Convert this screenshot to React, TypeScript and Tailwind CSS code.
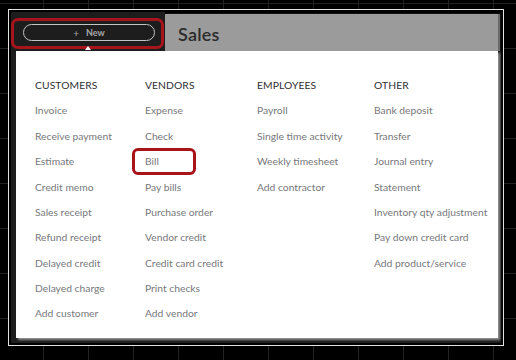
import React from 'react';

const columns: { title: string; items: string[] }[] = [
  {
    title: 'CUSTOMERS',
    items: [
      'Invoice',
      'Receive payment',
      'Estimate',
      'Credit memo',
      'Sales receipt',
      'Refund receipt',
      'Delayed credit',
      'Delayed charge',
      'Add customer',
    ],
  },
  {
    title: 'VENDORS',
    items: [
      'Expense',
      'Check',
      'Bill',
      'Pay bills',
      'Purchase order',
      'Vendor credit',
      'Credit card credit',
      'Print checks',
      'Add vendor',
    ],
  },
  {
    title: 'EMPLOYEES',
    items: ['Payroll', 'Single time activity', 'Weekly timesheet', 'Add contractor'],
  },
  {
    title: 'OTHER',
    items: [
      'Bank deposit',
      'Transfer',
      'Journal entry',
      'Statement',
      'Inventory qty adjustment',
      'Pay down credit card',
      'Add product/service',
    ],
  },
];

const App: React.FC = () => {
  return (
    <div
      className="w-[516px] h-[360px] bg-black pl-[8px] pt-[9px] bg-[linear-gradient(to_right,#222_1px,transparent_1px),linear-gradient(to_bottom,#222_1px,transparent_1px)] bg-[size:45px_45px] bg-[position:43px_3px]"
      style={{ fontFamily: 'Lato, "Open Sans", sans-serif' }}
    >
      <div className="w-[496px] h-[337px] border border-[#e2e2e2] bg-black p-[2px]">
        <div className="relative flex flex-col h-full">
          {/* top bar */}
          <div className="flex h-[39px]">
            <div className="w-[154px] bg-[#1d1d1d] pt-[6px]">
              <div className="h-[31px] w-[153px] border-[3px] border-[#a8141b] rounded-[7px] pl-[9px] pt-[3px]">
                <button className="flex items-center justify-center gap-[7px] w-[132px] h-[17px] rounded-full border-[1.5px] border-[#c4c4c4] text-[9px] font-bold text-[#a9a9a9] leading-none">
                  <span className="text-[10px] font-normal">+</span>
                  <span>New</span>
                </button>
              </div>
            </div>
            <div className="flex-1 mt-[2px] mr-[3px] bg-[#9b9b9b] flex items-center pl-[13px] pt-[4px] shadow-[2px_0_1px_#6a6a6a]">
              <h1 className="text-[18px] font-semibold text-[#2b2b2b] tracking-[0.2px]">Sales</h1>
            </div>
          </div>

          {/* caret under New */}
          <div className="absolute left-[74px] top-[34px] w-0 h-0 border-l-[3px] border-r-[3px] border-b-[4px] border-l-transparent border-r-transparent border-b-white" />

          {/* dropdown panel */}
          <div className="flex flex-1 bg-[#1d1d1d] pb-[5px]">
            <div className="ml-[5px] mr-[3px] flex-1 bg-white shadow-[2px_2px_2px_rgba(160,160,160,0.9)] pl-[19px] pt-[22px]">
              <div className="grid grid-cols-[110px_112px_117px_1fr]">
                {columns.map((col) => (
                  <div key={col.title} className="flex flex-col">
                    <div className="h-[25.4px] flex items-center text-[10.3px] font-normal text-[#2f3033] tracking-[0.1px]">
                      {col.title}
                    </div>
                    {col.items.map((item) => (
                      <div
                        key={item}
                        className="relative h-[25.4px] flex items-center text-[10.3px] text-[#77787c]"
                      >
                        {item}
                        {item === 'Bill' && (
                          <span className="absolute -left-[13px] -top-[1px] w-[64px] h-[27px] border-[3px] border-[#a8141b] rounded-[6px]" />
                        )}
                      </div>
                    ))}
                  </div>
                ))}
              </div>
            </div>
          </div>
        </div>
      </div>
    </div>
  );
};

export default App;
